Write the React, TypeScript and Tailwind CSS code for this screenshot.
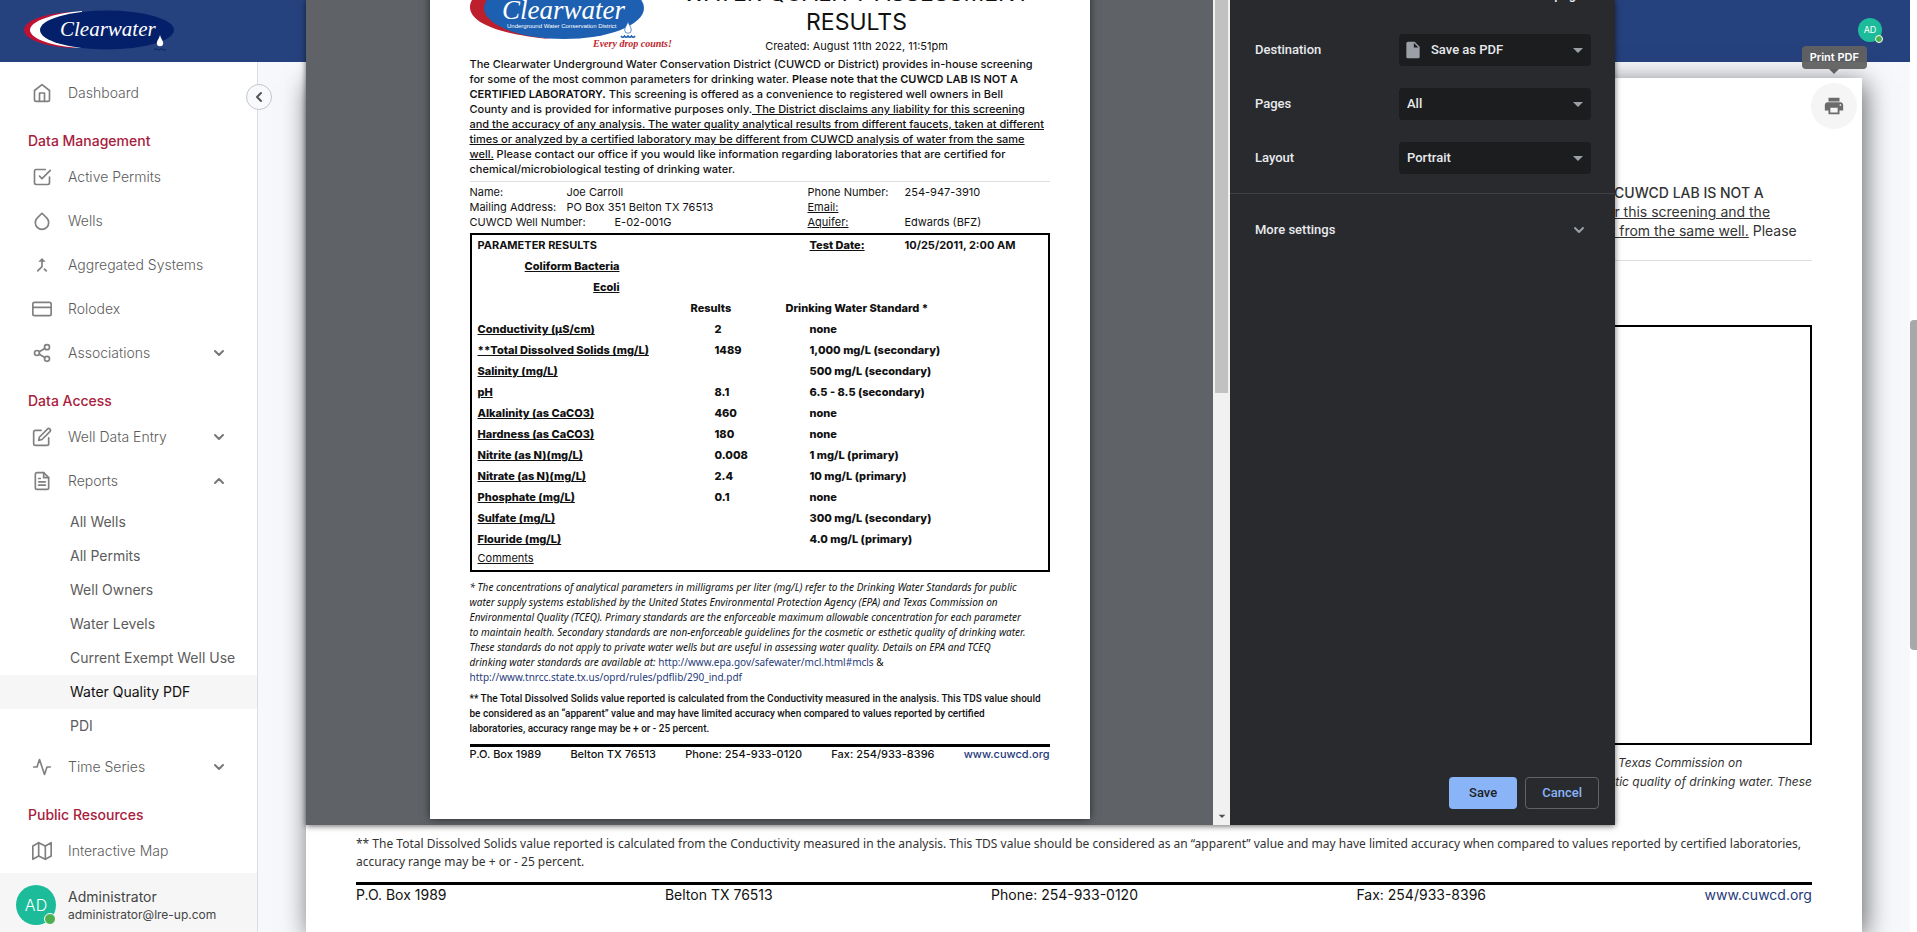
import React from "react";
import type { IconType } from "react-icons";
import {
  FiHome, FiCheckSquare, FiDroplet, FiCreditCard, FiShare2, FiEdit, FiFileText,
  FiActivity, FiMap, FiChevronDown, FiChevronUp, FiChevronLeft,
} from "react-icons/fi";
import { MdCallMerge, MdPrint, MdInsertDriveFile, MdArrowDropDown } from "react-icons/md";

const reports = [
  "All Wells", "All Permits", "Well Owners", "Water Levels",
  "Current Exempt Well Use", "Water Quality PDF", "PDI",
];

const results: [string, string, string][] = [
  ["Conductivity (µS/cm)", "2", "none"],
  ["**Total Dissolved Solids (mg/L)", "1489", "1,000 mg/L (secondary)"],
  ["Salinity (mg/L)", "", "500 mg/L (secondary)"],
  ["pH", "8.1", "6.5 - 8.5 (secondary)"],
  ["Alkalinity (as CaCO3)", "460", "none"],
  ["Hardness (as CaCO3)", "180", "none"],
  ["Nitrite (as N)(mg/L)", "0.008", "1 mg/L (primary)"],
  ["Nitrate (as N)(mg/L)", "2.4", "10 mg/L (primary)"],
  ["Phosphate (mg/L)", "0.1", "none"],
  ["Sulfate (mg/L)", "", "300 mg/L (secondary)"],
  ["Flouride (mg/L)", "", "4.0 mg/L (primary)"],
];

function NavItem({ icon: Icon, label, toggle }: { icon: IconType; label: string; toggle?: "up" | "down" }) {
  return (
    <a href="#" className="flex h-11 items-center pl-8 pr-[30px] text-sm font-light text-[#5c5c5c]">
      <Icon className="mr-4 size-5 shrink-0 text-[#808080]" />
      <span className="flex-1">{label}</span>
      {toggle === "down" && <FiChevronDown className="size-4 text-[#777]" strokeWidth={3} />}
      {toggle === "up" && <FiChevronUp className="size-4 text-[#777]" strokeWidth={3} />}
    </a>
  );
}

function NavHeading({ children }: { children: React.ReactNode }) {
  return <h2 className="flex h-10 items-center pt-3 pl-7 text-sm font-medium text-[#a8203c]">{children}</h2>;
}

function Avatar({ small }: { small?: boolean }) {
  return (
    <span
      className={
        small
          ? "relative flex size-6 items-center justify-center rounded-full bg-[#1cbc9b] text-[9px] text-white"
          : "relative flex size-10 shrink-0 items-center justify-center rounded-full bg-[#1cbc9b] text-base font-light text-white"
      }
    >
      AD
      <span
        className={
          small
            ? "absolute -right-px -bottom-px size-2 rounded-full border border-white bg-[#4caf50]"
            : "absolute right-0 bottom-0 size-3 rounded-full border border-white bg-[#4caf50]"
        }
      />
    </span>
  );
}

function HeaderLogo() {
  return (
    <svg width="152" height="42" viewBox="0 0 152 42" className="shrink-0">
      <path d="M50 2C20 3 0 11 0 20s20 17 50 18z" fill="#c01033" />
      <path d="M58 1C30 3 6 11 6 20s24 17 52 18z" fill="#fff" />
      <ellipse cx="83" cy="20" rx="67" ry="19.5" fill="#04206a" />
      <text x="36" y="26" fontSize="21" fontStyle="italic" fill="#fff" fontFamily="Liberation Serif, serif">Clearwater</text>
      <path d="M136 25c.8 3.500 3.200 5.500 3.200 8a3.200 3.200 0 0 1-6.400 0c0-2.500 2.400-4.500 3.200-8z" fill="#fff" />
      <path d="M130 39.500q1.500-1.500 3 0t3 0t3 0t3 0" fill="none" stroke="#04206a" />
    </svg>
  );
}

function PageLogo() {
  return (
    <svg width="206" height="74" viewBox="0 0 206 74" className="mb-[5px] shrink-0">
      <path d="M80 2C30 2 0 16 0 32c0 15 26 27 80 32C40 56 15 46 15 33S40 6 80 2z" fill="#bd1f2d" />
      <ellipse cx="94" cy="33" rx="80" ry="31" fill="#1d5fb0" />
      <text x="32" y="44" fontSize="27" fontStyle="italic" fill="#fff" fontFamily="Liberation Serif, serif">Clearwater</text>
      <text x="37" y="53" fontSize="6" fill="#fff" fontFamily="Liberation Sans, sans-serif">Underground Water Conservation District</text>
      <path d="M158 46c.8 4 3.300 6 3.300 9a3.300 3.300 0 0 1-6.600 0c0-3 2.500-5 3.300-9z" fill="#fff" stroke="#1d5fb0" strokeWidth=".7" />
      <path d="M151 61q1.700 2.500 3.500 0q1.700 2.500 3.500 0q1.700 2.500 3.500 0q1.700 2.500 3.500 0" fill="none" stroke="#1d5fb0" strokeWidth="1.500" />
      <text x="123" y="72" fontSize="10" fontStyle="italic" fontWeight="bold" fill="#bd1f2d" fontFamily="Liberation Serif, serif">Every drop counts!</text>
    </svg>
  );
}

function Sidebar() {
  return (
    <aside className="relative flex w-[258px] shrink-0 flex-col border-r border-[#dcdde1] bg-white">
      <button
        type="button"
        aria-label="Collapse menu"
        className="absolute top-[22px] -right-[15px] z-10 flex size-[26px] items-center justify-center rounded-full border border-[#c4c6cc] bg-[#f7f9fc]"
      >
        <FiChevronLeft className="size-4 text-[#555]" strokeWidth={3} />
      </button>
      <nav className="pt-[9px]">
        <NavItem icon={FiHome} label="Dashboard" />
        <NavHeading>Data Management</NavHeading>
        <NavItem icon={FiCheckSquare} label="Active Permits" />
        <NavItem icon={FiDroplet} label="Wells" />
        <NavItem icon={MdCallMerge} label="Aggregated Systems" />
        <NavItem icon={FiCreditCard} label="Rolodex" />
        <NavItem icon={FiShare2} label="Associations" toggle="down" />
        <NavHeading>Data Access</NavHeading>
        <NavItem icon={FiEdit} label="Well Data Entry" toggle="down" />
        <NavItem icon={FiFileText} label="Reports" toggle="up" />
        <ul className="py-[2px]">
          {reports.map((name) => (
            <li key={name}>
              <a
                href="#"
                className={
                  name === "Water Quality PDF"
                    ? "flex h-[34px] items-center bg-[#f6f6f6] pl-[70px] text-sm text-[#111]"
                    : "flex h-[34px] items-center pl-[70px] text-sm text-[#5c5c5c]"
                }
              >
                {name}
              </a>
            </li>
          ))}
        </ul>
        <NavItem icon={FiActivity} label="Time Series" toggle="down" />
        <NavHeading>Public Resources</NavHeading>
        <NavItem icon={FiMap} label="Interactive Map" />
      </nav>
      <div className="flex flex-1 items-center gap-3 bg-[#f6f6f6] pl-4 pt-1">
        <Avatar />
        <div className="leading-5 text-[#444]">
          <p className="text-sm">Administrator</p>
          <p className="text-xs">administrator@lre-up.com</p>
        </div>
      </div>
    </aside>
  );
}

function FooterLine() {
  return (
    <>
      <span>P.O. Box 1989</span>
      <span>Belton TX 76513</span>
      <span>Phone: 254-933-0120</span>
      <span>Fax: 254/933-8396</span>
      <a href="#" className="text-[#1f3a7a]">www.cuwcd.org</a>
    </>
  );
}

function Paper() {
  return (
    <article className="relative mt-4 mr-12 ml-12 flex flex-1 flex-col bg-white px-[50px] pt-[105px] pb-6 text-sm text-[#333] shadow-[3px_5px_25px_rgba(0,0,0,0.6)]">
      <button
        type="button"
        aria-label="Print PDF"
        className="absolute top-[5px] right-[5px] flex size-[46px] items-center justify-center rounded-full bg-[#f5f5f5]"
      >
        <MdPrint className="size-[22px] text-[#6b6b6b]" />
      </button>
      <div
        role="tooltip"
        className="absolute -top-8 -right-[5px] z-10 rounded bg-[#616161]/95 px-2 text-[11px] leading-[23px] font-semibold text-white"
      >
        Print PDF
        <span className="absolute top-full left-1/2 -translate-x-1/2 border-x-[5px] border-t-[5px] border-x-transparent border-t-[#616161]" />
      </div>
      <div className="ml-auto w-[206px] leading-[19px] whitespace-nowrap">
        <p className="pl-2 font-medium">CUWCD LAB IS NOT A</p>
        <p className="underline">or this screening and the</p>
        <p className="pl-1"><u>r from the same well.</u> Please</p>
      </div>
      <hr className="mt-5 border-[#ddd]" />
      <div className="mt-16 h-[420px] border-2 border-black" />
      <div className="mt-2 ml-auto w-[194px] text-xs leading-[19px] whitespace-nowrap italic">
        <p>Texas Commission on</p>
        <p className="flex justify-end">tic quality of drinking water. These</p>
      </div>
      <p className="mt-11 font-['Noto_Sans',sans-serif] text-xs leading-[18px]">
        ** The Total Dissolved Solids value reported is calculated from the Conductivity measured in the analysis. This TDS
        value should be considered as an “apparent” value and may have limited accuracy when compared to values reported by
        certified laboratories, accuracy range may be + or - 25 percent.
      </p>
      <footer className="mt-[11px] flex justify-between border-t-[3px] border-black text-sm leading-5 text-[#111]">
        <FooterLine />
      </footer>
    </article>
  );
}

function PreviewPage() {
  return (
    <article className="flex w-[660px] flex-col bg-white px-10 pb-[57px] text-[11px] font-medium whitespace-nowrap text-[#111] shadow-[0_0_8px_rgba(0,0,0,0.6)]">
      <header className="flex items-end">
        <PageLogo />
        <div className="flex-1 pr-3 text-center">
          <h1 className="text-[23px] leading-[29px] font-normal">WATER QUALITY ASSESSMENT<br />RESULTS</h1>
          <p className="pt-px leading-4 font-normal">Created: August 11th 2022, 11:51pm</p>
        </div>
      </header>
      <p className="mt-[3px] leading-[15px]">
        The Clearwater Underground Water Conservation District (CUWCD or District) provides in-house screening<br />
        for some of the most common parameters for drinking water. <b className="font-semibold">Please note that the CUWCD LAB IS NOT A<br />
        CERTIFIED LABORATORY.</b> This screening is offered as a convenience to registered well owners in Bell<br />
        County and is provided for informative purposes only.<u> The District disclaims any liability for this screening<br />
        and the accuracy of any analysis. The water quality analytical results from different faucets, taken at different<br />
        times or analyzed by a certified laboratory may be different from CUWCD analysis of water from the same<br />
        well.</u> Please contact our office if you would like information regarding laboratories that are certified for<br />
        chemical/microbiological testing of drinking water.
      </p>
      <hr className="mt-1 mb-[3px] border-[#ddd]" />
      <div className="grid grid-cols-[338px_1fr] leading-[15px] font-normal">
        <dl>
          <div className="flex"><dt className="w-[97px]">Name:</dt><dd>Joe Carroll</dd></div>
          <div className="flex"><dt className="w-[97px]">Mailing Address:</dt><dd>PO Box 351 Belton TX 76513</dd></div>
          <div className="flex"><dt className="w-[145px]">CUWCD Well Number:</dt><dd>E-02-001G</dd></div>
        </dl>
        <dl>
          <div className="flex"><dt className="w-[97px]">Phone Number:</dt><dd>254-947-3910</dd></div>
          <div className="flex"><dt className="underline">Email:</dt><dd /></div>
          <div className="flex"><dt className="w-[97px] underline">Aquifer:</dt><dd>Edwards (BFZ)</dd></div>
        </dl>
      </div>
      <div className="mt-[3px] border-2 border-black pb-1 pl-[6px]">
        <table className="w-full table-fixed text-left font-extrabold">
          <colgroup>
            <col className="w-[142px]" />
            <col className="w-[95px]" />
            <col className="w-[95px]" />
            <col className="w-[95px]" />
            <col />
          </colgroup>
          <tbody>
            <tr className="h-[21px]">
              <th scope="row" colSpan={3} className="font-bold">PARAMETER RESULTS</th>
              <th scope="row" className="font-extrabold underline">Test Date:</th>
              <td className="font-bold">10/25/2011, 2:00 AM</td>
            </tr>
            <tr className="h-[21px]">
              <th scope="row" className="text-right font-extrabold underline">Coliform Bacteria</th>
              <td colSpan={4} />
            </tr>
            <tr className="h-[21px]">
              <th scope="row" className="text-right font-extrabold underline">Ecoli</th>
              <td colSpan={4} />
            </tr>
            <tr className="h-[21px]">
              <td colSpan={2} />
              <th scope="col" className="font-extrabold"><span className="-ml-6">Results</span></th>
              <th scope="col" colSpan={2} className="font-extrabold"><span className="-ml-6">Drinking Water Standard *</span></th>
            </tr>
            {results.map(([name, value, standard]) => (
              <tr key={name} className="h-[21px]">
                <th scope="row" colSpan={2} className="font-extrabold underline">{name}</th>
                <td>{value}</td>
                <td colSpan={2}>{standard}</td>
              </tr>
            ))}
          </tbody>
        </table>
        <p className="leading-4 font-normal underline">Comments</p>
      </div>
      <p className="mt-2 font-['Noto_Sans',sans-serif] text-[10px] leading-[15px] font-normal italic">
        * The concentrations of analytical parameters in milligrams per liter (mg/L) refer to the Drinking Water Standards for public<br />
        water supply systems established by the United States Environmental Protection Agency (EPA) and Texas Commission on<br />
        Environmental Quality (TCEQ). Primary standards are the enforceable maximum allowable concentration for each parameter<br />
        to maintain health. Secondary standards are non-enforceable guidelines for the cosmetic or esthetic quality of drinking water.<br />
        These standards do not apply to private water wells but are useful in assessing water quality. Details on EPA and TCEQ<br />
        drinking water standards are available at:{" "}
        <span className="not-italic">
          <a href="#" className="text-[#1f3a7a]">http://www.epa.gov/safewater/mcl.html#mcls</a> &<br />
          <a href="#" className="text-[#1f3a7a]">http://www.tnrcc.state.tx.us/oprd/rules/pdflib/290_ind.pdf</a>
        </span>
      </p>
      <p className="mt-[6px] font-['Roboto',sans-serif] text-[10px] leading-[15px]">
        ** The Total Dissolved Solids value reported is calculated from the Conductivity measured in the analysis. This TDS value should<br />
        be considered as an “apparent” value and may have limited accuracy when compared to values reported by certified<br />
        laboratories, accuracy range may be + or - 25 percent.
      </p>
      <footer className="mt-2 flex justify-between border-t-[3px] border-black leading-[15px]">
        <FooterLine />
      </footer>
    </article>
  );
}

function SettingRow({ id, label, value, icon }: { id: string; label: string; value: string; icon?: boolean }) {
  return (
    <div className="flex h-[54px] items-center justify-between pr-6 pl-[25px]">
      <label htmlFor={id}>{label}</label>
      <div className="relative">
        <select
          id={id}
          className={
            icon
              ? "h-8 w-48 appearance-none rounded bg-[#1c1d1f] pl-8 text-[#e8eaed]"
              : "h-8 w-48 appearance-none rounded bg-[#1c1d1f] pl-2 text-[#e8eaed]"
          }
        >
          <option>{value}</option>
        </select>
        {icon && <MdInsertDriveFile className="pointer-events-none absolute top-[6px] left-1 size-5 text-[#9aa0a6]" />}
        <MdArrowDropDown className="pointer-events-none absolute top-1 right-[1px] size-6 text-[#9aa0a6]" />
      </div>
    </div>
  );
}

function PrintDialog() {
  return (
    <section
      role="dialog"
      aria-label="Print"
      className="absolute top-0 left-[306px] z-20 flex h-[825px] w-[1309px] overflow-hidden shadow-[0_1px_6px_rgba(0,0,0,0.6)]"
    >
      <div className="flex flex-1 flex-col items-center justify-end overflow-hidden bg-[#5f6368] pb-[6px]">
        <PreviewPage />
      </div>
      <div className="flex w-[17px] flex-col items-center bg-[#f1f1f1]">
        <div className="h-[393px] w-[13px] bg-[#c1c1c1]" />
        <MdArrowDropDown className="mt-auto mb-px size-4 text-[#505050]" />
      </div>
      <div className="flex w-[385px] flex-col bg-[#292a2d] font-['Roboto',sans-serif] text-[13px] font-medium text-[#e8eaed]">
        <p className="-mt-[34px] flex h-[57px] items-center justify-end pr-8">1 page</p>
        <SettingRow id="destination" label="Destination" value="Save as PDF" icon />
        <SettingRow id="pages" label="Pages" value="All" />
        <SettingRow id="layout" label="Layout" value="Portrait" />
        <hr className="mt-2 border-[#3f4145]" />
        <button type="button" className="flex h-[71px] items-center justify-between pr-[28px] pl-[25px]">
          More settings
          <FiChevronDown className="size-4 text-[#9aa0a6]" strokeWidth={3} />
        </button>
        <div className="mt-auto flex justify-end gap-2 pr-4 pb-4">
          <button type="button" className="h-8 rounded bg-[#8ab4f8] px-5 text-[#202124]">Save</button>
          <button type="button" className="h-8 rounded border border-[#5f6368] px-4 text-[#8ab4f8]">Cancel</button>
        </div>
      </div>
    </section>
  );
}

export default function App() {
  return (
    <div className="relative flex min-h-screen overflow-hidden bg-white font-['Inter',sans-serif]">
      <div className="flex flex-1 flex-col bg-[#f7f8fc]">
        <header className="flex h-[62px] items-start justify-between bg-[#26427e] pl-6 pr-7">
          <div className="pt-[10px]"><HeaderLogo /></div>
          <div className="pt-[18px]"><Avatar small /></div>
        </header>
        <div className="flex flex-1">
          <Sidebar />
          <main className="flex flex-1 flex-col">
            <Paper />
          </main>
        </div>
      </div>
      <div className="w-[7px] bg-white pt-80">
        <div className="h-[330px] rounded-l bg-[#a8a8a8]" />
      </div>
      <PrintDialog />
    </div>
  );
}
